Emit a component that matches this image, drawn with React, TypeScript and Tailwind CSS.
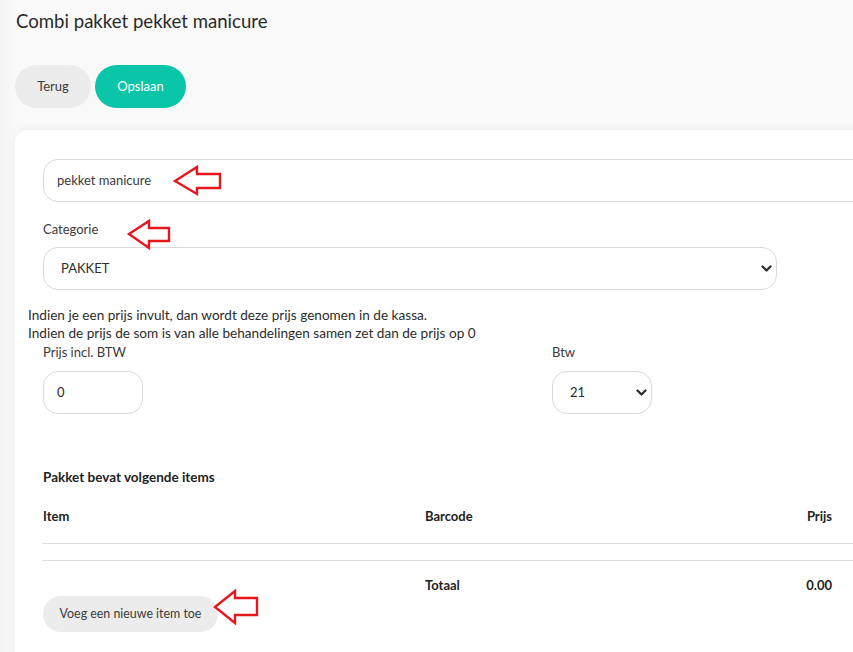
import React from "react";

function Chevron() {
  return (
    <svg width="11" height="7" viewBox="0 0 11 7" className="shrink-0">
      <polyline points="1.5,1.5 5.5,5.5 9.5,1.5" fill="none" stroke="#2a2a2a" strokeWidth="2.2" strokeLinecap="round" strokeLinejoin="round" />
    </svg>
  );
}

function Arrow({ d, box }: { d: string; box: string }) {
  return (
    <svg className={box} width="853" height="652" viewBox="0 0 853 652" fill="none">
      <path d={d} stroke="#e5161e" strokeWidth="2.4" strokeLinejoin="miter" fill="none" />
    </svg>
  );
}

export default function App() {
  return (
    <div className="relative w-[853px] h-[652px] overflow-hidden bg-[linear-gradient(to_right,#f3f3f3,#f9f9f9_16px)] font-[Lato,sans-serif] text-[#2c2c2c]">
      <h1 className="ml-[16px] mt-[9px] text-[18.6px] leading-[24px] font-normal text-[#2a2a2a]">
        Combi pakket pekket manicure
      </h1>

      <div className="ml-[15px] mt-[32px] flex gap-[4px]">
        <button className="h-[43px] w-[76px] rounded-full bg-[#ececec] text-[13px] text-[#3a3a3a]">Terug</button>
        <button className="h-[43px] w-[91px] rounded-full bg-[#0bc5a8] text-[13px] text-white">Opslaan</button>
      </div>

      <div className="ml-[15px] mt-[22px] w-[1100px] rounded-tl-[12px] bg-white pl-[13px] pt-[29px] pb-[40px] shadow-[0_-3px_10px_rgba(0,0,0,0.035)]">
        <div className="ml-[15px] flex h-[43px] w-[988px] items-center rounded-[15px] border border-[#dadada] pl-[13px] text-[13px] text-[#3a3a3a]">
          pekket manicure
        </div>

        <div className="ml-[15px] mt-[17px] text-[13px] leading-[20px] text-[#3a3a3a]">Categorie</div>
        <div className="ml-[15px] mt-[8px] flex h-[43px] w-[734px] items-center justify-between rounded-[15px] border border-[#dadada] pl-[17px] pr-[4px] text-[13px] text-[#2c2c2c]">
          <span>PAKKET</span>
          <Chevron />
        </div>

        <div className="mt-[16px] text-[13.6px] leading-[18px] text-[#2c2c2c]">
          <div>Indien je een prijs invult, dan wordt deze prijs genomen in de kassa.</div>
          <div>Indien de prijs de som is van alle behandelingen samen zet dan de prijs op 0</div>
        </div>

        <div className="ml-[15px] mt-[1px] flex">
          <div className="w-[509px]">
            <div className="text-[13px] leading-[18px] text-[#3a3a3a]">Prijs incl. BTW</div>
            <div className="mt-[10px] flex h-[43px] w-[100px] items-center rounded-[15px] border border-[#dadada] pl-[13px] text-[13px]">0</div>
          </div>
          <div>
            <div className="text-[13px] leading-[18px] text-[#3a3a3a]">Btw</div>
            <div className="mt-[10px] flex h-[43px] w-[100px] items-center justify-between rounded-[15px] border border-[#dadada] pl-[17px] pr-[4px] text-[13px]">
              <span>21</span>
              <Chevron />
            </div>
          </div>
        </div>

        <div className="ml-[15px] mt-[54px] text-[13.5px] font-bold leading-[18px] text-[#222]">Pakket bevat volgende items</div>

        <div className="ml-[15px] w-[988px] text-[13px] font-bold leading-[18px] text-[#222]">
          <div className="mt-[21px] flex border-b border-[#dcdcdc] pb-[18px]">
            <div className="w-[382px]">Item</div>
            <div className="w-[250px]">Barcode</div>
            <div className="w-[157px] text-right">Prijs</div>
          </div>
          <div className="h-[17px] border-b border-[#dcdcdc]" />
          <div className="mt-[15px] flex">
            <div className="w-[382px]" />
            <div className="w-[250px]">Totaal</div>
            <div className="w-[157px] text-right">0.00</div>
          </div>
        </div>

        <button className="ml-[15px] mt-[2px] h-[36px] w-[175px] rounded-full bg-[#ececec] text-[12.4px] text-[#3a3a3a]">
          Voeg een nieuwe item toe
        </button>
      </div>

      <Arrow box="pointer-events-none absolute left-0 top-0" d="M175 181 L197 167 L197 174 L220 174 L220 188 L197 188 L197 194 Z" />
      <Arrow box="pointer-events-none absolute left-0 top-0" d="M129 234 L149 221 L149 228 L169 228 L169 241 L149 241 L149 248 Z" />
      <Arrow box="pointer-events-none absolute left-0 top-0" d="M215 607 L235 591 L235 598 L257 598 L257 615 L235 615 L235 623 Z" />
    </div>
  );
}
